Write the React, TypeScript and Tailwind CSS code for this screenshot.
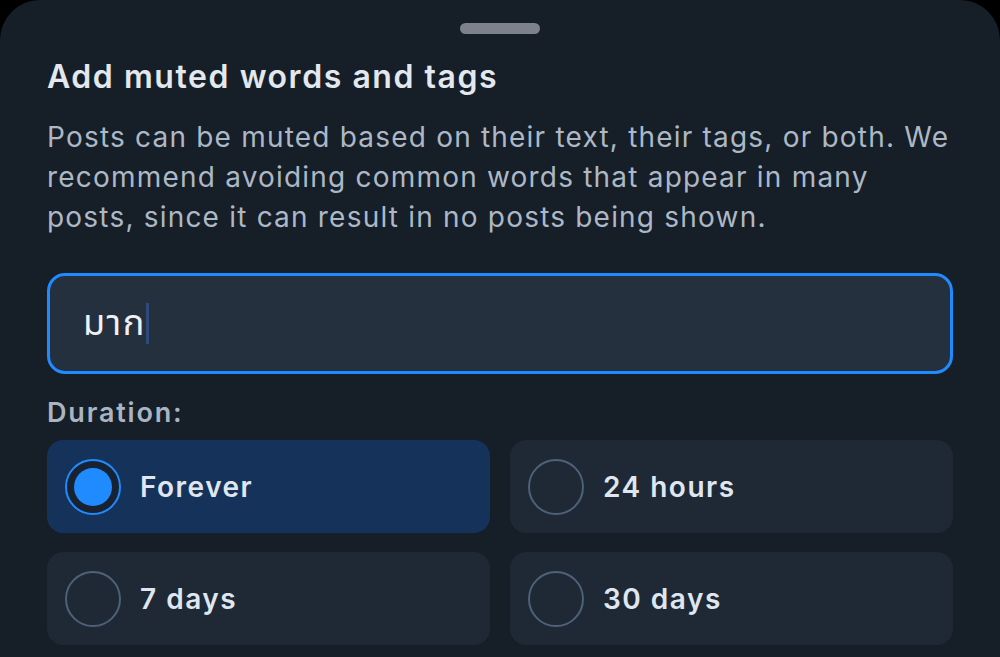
import React, { useState } from 'react';

const options = [
  { id: 'forever', label: 'Forever' },
  { id: '24h', label: '24 hours' },
  { id: '7d', label: '7 days' },
  { id: '30d', label: '30 days' },
];

const Radio = ({ checked }: { checked: boolean }) =>
  checked ? (
    <div className="w-[56px] h-[56px] rounded-full border-2 border-[#208bfe] bg-[#172333] flex items-center justify-center shrink-0">
      <div className="w-[38px] h-[38px] rounded-full bg-[#208bfe]" />
    </div>
  ) : (
    <div className="w-[56px] h-[56px] rounded-full border-2 border-[#4e6177] shrink-0" />
  );

export default function App() {
  const [duration, setDuration] = useState('forever');

  return (
    <div
      className="w-[1000px] h-[657px] bg-black overflow-hidden"
      style={{ fontFamily: 'Inter, "Noto Sans", "Noto Sans Thai", sans-serif' }}
    >
      <div className="h-full bg-[#161e27] rounded-t-[40px] px-[47px] flex flex-col">
        {/* drag handle */}
        <div className="mt-[23px] mx-auto w-[80px] h-[11px] rounded-full bg-[#7c818b]" />

        <h1 className="mt-[23px] text-[32px] leading-[40px] font-semibold text-[#e3e8ef] tracking-[1.55px]">
          Add muted words and tags
        </h1>
        <p className="mt-[20px] text-[28px] leading-[40px] text-[#acb8c6] tracking-[1.2px]">
          Posts can be muted based on their text, their tags, or both. We recommend avoiding common words that appear in many posts, since it can result in no posts being shown.
        </p>

        {/* text field, shown focused with caret */}
        <div className="mt-[36px] h-[101px] rounded-[18px] border-[3px] border-[#208bfe] bg-[#25303e] flex items-center px-[33px]">
          <span className="text-[36px] leading-[44px] text-[#eef2f6] tracking-[1.5px] -mt-[4px]">มาก</span>
          <span className="w-[3px] h-[41px] bg-[#2d4a7c]" />
        </div>

        <div className="mt-[23px] text-[27px] leading-[32px] font-semibold text-[#a9b5c3] tracking-[1.8px]">
          Duration:
        </div>

        <div className="mt-[11px] grid grid-cols-2 gap-x-[20px] gap-y-[19px]">
          {options.map((o) => {
            const checked = duration === o.id;
            return (
              <button
                key={o.id}
                onClick={() => setDuration(o.id)}
                className={
                  'h-[93px] rounded-[16px] flex items-center gap-[19px] px-[18px] text-left ' +
                  (checked ? 'bg-[#15325a]' : 'bg-[#1e2935]')
                }
              >
                <Radio checked={checked} />
                <span className="text-[28px] font-semibold text-[#dfe6ef] tracking-[1.5px]">{o.label}</span>
              </button>
            );
          })}
        </div>
      </div>
    </div>
  );
}
